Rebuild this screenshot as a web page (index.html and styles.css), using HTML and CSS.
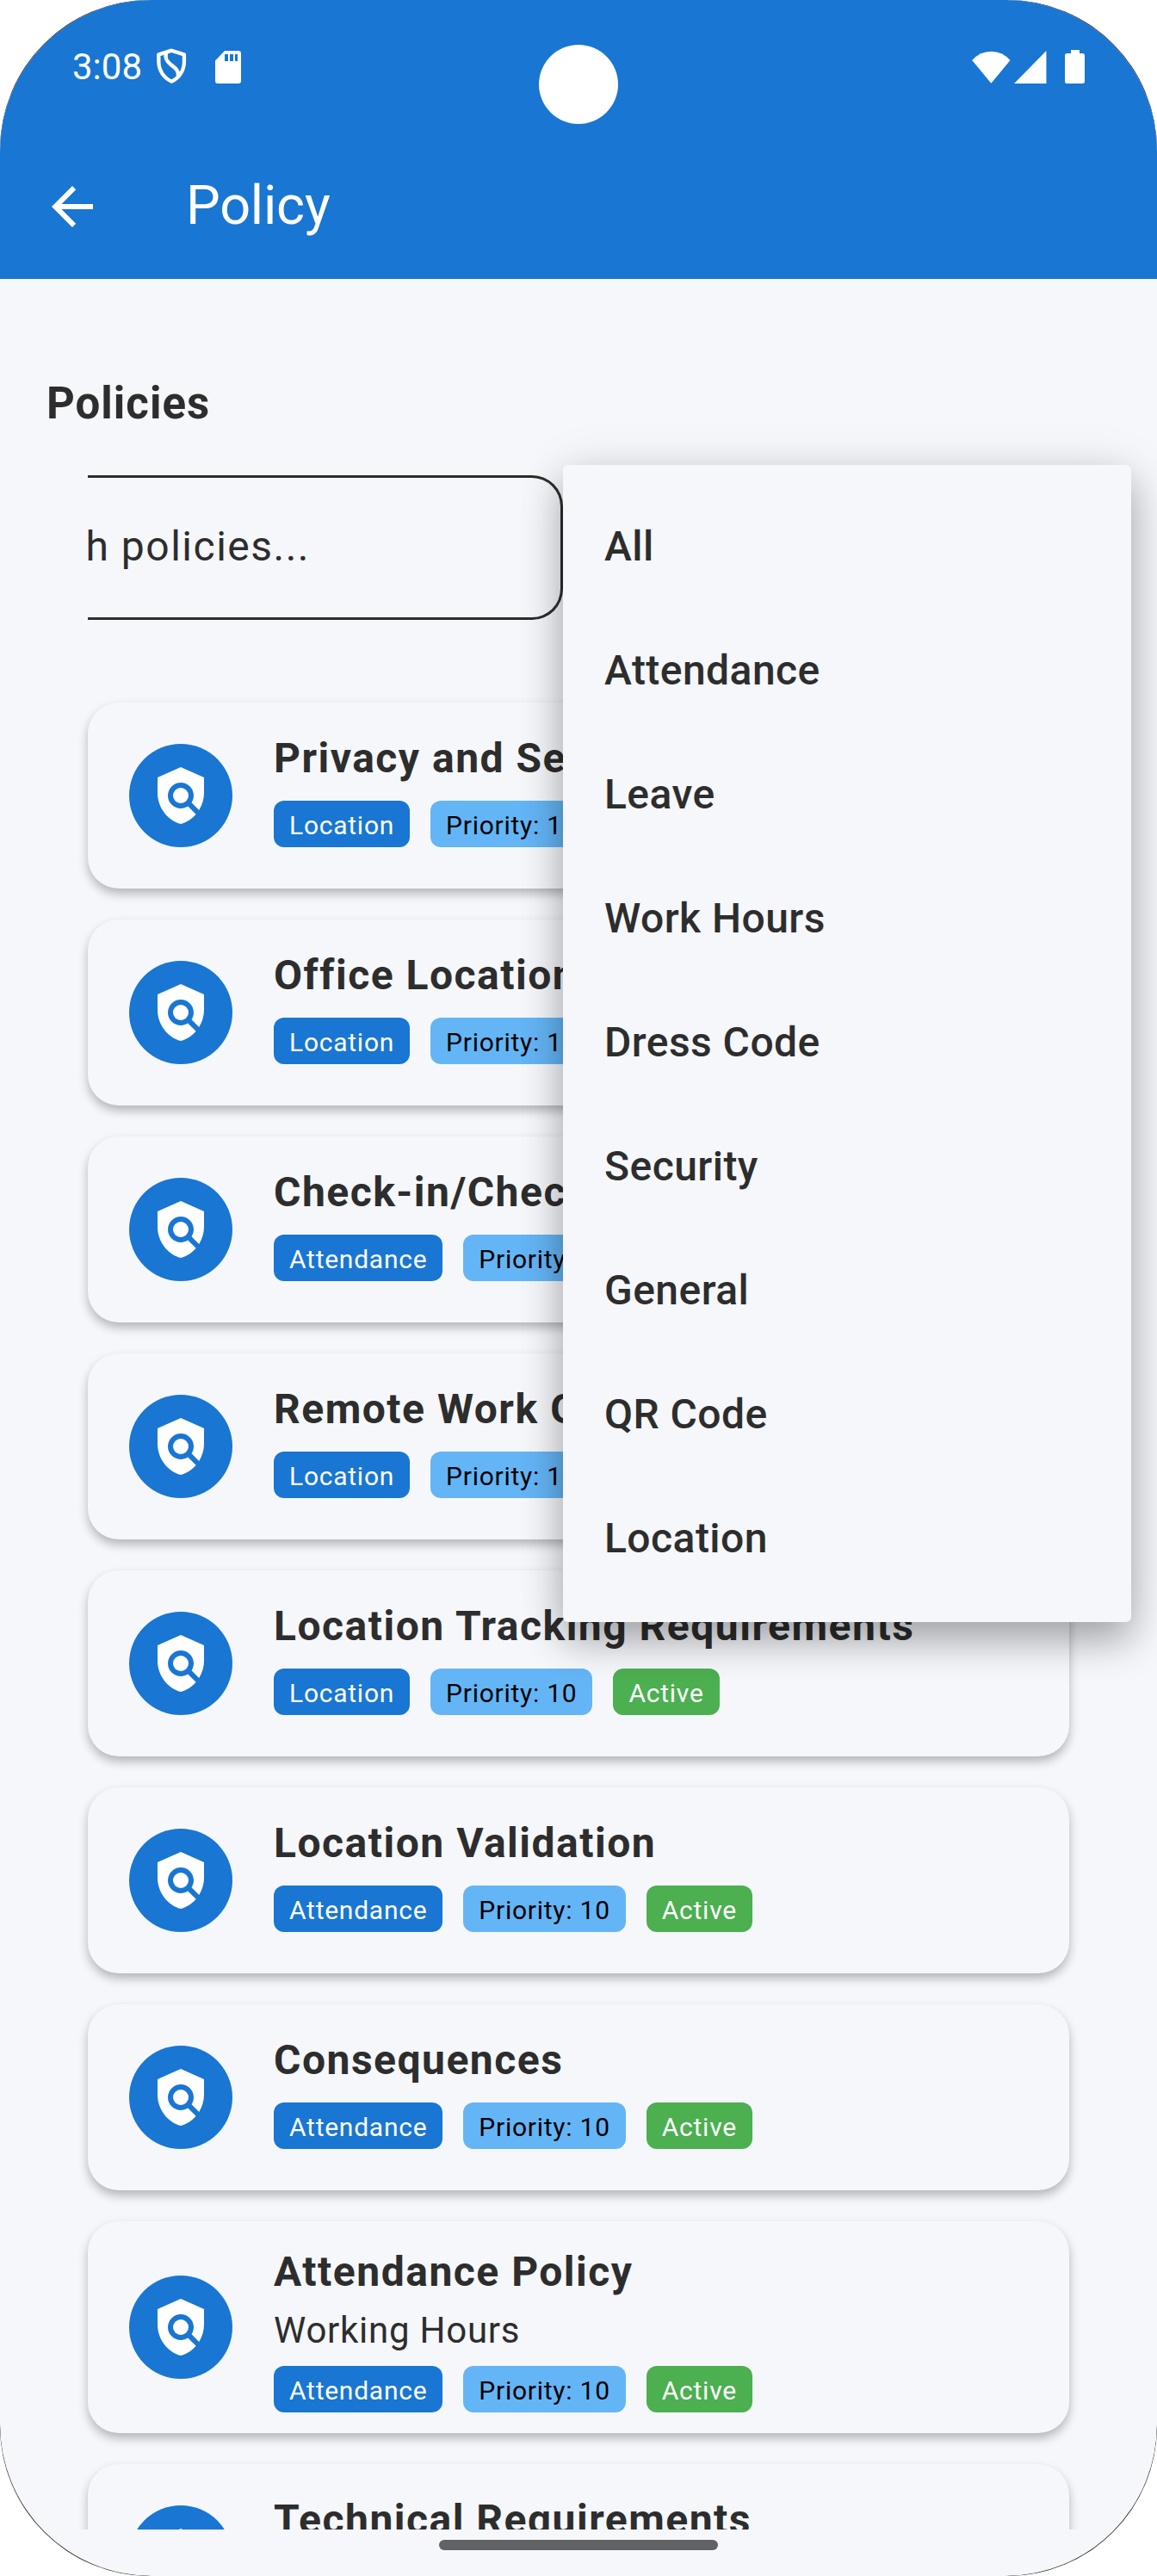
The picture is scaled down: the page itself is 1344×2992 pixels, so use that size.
FILE: index.html
```html
<!DOCTYPE html>
<html lang="en">
<head>
<meta charset="utf-8">
<title>Policy</title>
<link rel="stylesheet" href="styles.css">
</head>
<body>
<svg width="0" height="0" class="defs">
  <symbol id="policy" viewBox="0 0 24 24">
    <path d="M21 5l-9-4-9 4v6c0 5.55 3.84 10.74 9 12 2.3-.56 4.33-1.9 5.88-3.71l-3.12-3.12c-1.94 1.29-4.58 1.07-6.29-.64-1.95-1.95-1.95-5.12 0-7.07 1.95-1.95 5.12-1.95 7.07 0 1.71 1.71 1.92 4.35.64 6.29l2.9 2.9C20.29 15.69 21 13.38 21 11V5z"/>
    <circle cx="12" cy="12" r="3"/>
  </symbol>
</svg>
<div class="frame">
<div class="screen">
  <header class="top">
    <div class="status">
      <span class="time">3:08</span>
      <svg class="shield" viewBox="66 52 104 124"><path d="M118 60L73 74V98C73 131 92 156 118 168C144 156 162 131 162 98V74Z M101 65C92 84 103 100 115 109C132 122 144 130 141 152"/></svg>
      <svg class="sd" viewBox="0 0 30 38"><path fill-rule="evenodd" d="M11 0H27a3 3 0 0 1 3 3V35a3 3 0 0 1-3 3H3a3 3 0 0 1-3-3V11.500ZM11 4V12H15V4ZM17 4V12H21V4ZM23 4V12H26V4Z"/></svg>
      <svg class="wifi" viewBox="58 54 135 115"><path d="M58 87Q86 56 125 56Q164 56 192 87L125 168Z"/></svg>
      <svg class="signal" viewBox="205 56 112 114"><path d="M205 170L317 56V170Z"/></svg>
      <svg class="battery" viewBox="0 0 23 39"><path d="M7 0H17V4H20.500A2.500 2.500 0 0 1 23 6.500V36.500A2.500 2.500 0 0 1 20.500 39H2.500A2.500 2.500 0 0 1 0 36.500V6.500A2.500 2.500 0 0 1 2.500 4H7Z"/></svg>
    </div>
    <div class="appbar">
      <svg class="back" viewBox="0 0 24 24"><path d="M20 11H7.830l5.590-5.590L12 4l-8 8 8 8 1.410-1.410L7.830 13H20v-2z"/></svg>
      <h1>Policy</h1>
    </div>
  </header>
  <main>
    <h2>Policies</h2>
    <div class="search"><span>h policies...</span></div>
    <div class="list">
      <article class="card"><div class="avatar"><svg><use href="#policy"/></svg></div><div class="info"><h3>Privacy and Security</h3><div class="chips"><span class="chip">Location</span><span class="chip priority">Priority: 10</span><span class="chip active">Active</span></div></div></article>
      <article class="card"><div class="avatar"><svg><use href="#policy"/></svg></div><div class="info"><h3>Office Location</h3><div class="chips"><span class="chip">Location</span><span class="chip priority">Priority: 10</span><span class="chip active">Active</span></div></div></article>
      <article class="card"><div class="avatar"><svg><use href="#policy"/></svg></div><div class="info"><h3>Check-in/Check-out</h3><div class="chips"><span class="chip">Attendance</span><span class="chip priority">Priority: 10</span><span class="chip active">Active</span></div></div></article>
      <article class="card"><div class="avatar"><svg><use href="#policy"/></svg></div><div class="info"><h3>Remote Work Guidelines</h3><div class="chips"><span class="chip">Location</span><span class="chip priority">Priority: 10</span><span class="chip active">Active</span></div></div></article>
      <article class="card"><div class="avatar"><svg><use href="#policy"/></svg></div><div class="info"><h3>Location Tracking Requirements</h3><div class="chips"><span class="chip">Location</span><span class="chip priority">Priority: 10</span><span class="chip active">Active</span></div></div></article>
      <article class="card"><div class="avatar"><svg><use href="#policy"/></svg></div><div class="info"><h3>Location Validation</h3><div class="chips"><span class="chip">Attendance</span><span class="chip priority">Priority: 10</span><span class="chip active">Active</span></div></div></article>
      <article class="card"><div class="avatar"><svg><use href="#policy"/></svg></div><div class="info"><h3>Consequences</h3><div class="chips"><span class="chip">Attendance</span><span class="chip priority">Priority: 10</span><span class="chip active">Active</span></div></div></article>
      <article class="card tall"><div class="avatar"><svg><use href="#policy"/></svg></div><div class="info"><h3>Attendance Policy</h3><p>Working Hours</p><div class="chips"><span class="chip">Attendance</span><span class="chip priority">Priority: 10</span><span class="chip active">Active</span></div></div></article>
      <article class="card"><div class="avatar"><svg><use href="#policy"/></svg></div><div class="info"><h3>Technical Requirements</h3></div></article>
    </div>
  </main>
  <footer><div class="handle"></div></footer>
  <ul class="menu">
    <li>All</li><li>Attendance</li><li>Leave</li><li>Work Hours</li><li>Dress Code</li><li>Security</li><li>General</li><li>QR Code</li><li>Location</li>
  </ul>
  <div class="camera"></div>
</div>
</div>
</body>
</html>
```
FILE: styles.css
```css
* { box-sizing: border-box; margin: 0; padding: 0; }
body { background: #fff; font-family: Roboto, sans-serif; color: #2d2d2d; }
.defs { position: absolute; }
.frame { width: 1344px; height: 2992px; border-radius: 174px; background: #222; overflow: hidden; }
.screen {
  position: relative; width: 1344px; height: 2992px; border-radius: 176px;
  overflow: hidden; background: #f5f7fb; display: flex; flex-direction: column;
}

.top { height: 324px; flex: none; background: #1976d2; color: #fff; fill: #fff; }
.status { height: 156px; display: flex; align-items: center; padding: 0 84px 1px; }
.time { font-size: 42px; line-height: 50px; width: 98px; }
.shield { width: 34.6px; height: 41.3px; fill: none; stroke: #fff; stroke-width: 13; stroke-linejoin: round; margin-top: -1px; }
.sd { width: 30px; height: 38px; margin-left: 33.4px; }
.wifi { width: 45px; height: 38px; margin-left: auto; }
.signal { width: 37.5px; height: 38px; margin-left: 4px; }
.battery { width: 23px; height: 39px; margin-left: 21.500px; margin-top: -1px; }
.appbar { height: 168px; display: flex; align-items: center; padding-left: 48px; gap: 96px; }
.back { width: 72px; height: 72px; }
h1 { font-size: 63px; font-weight: 400; line-height: 72px; letter-spacing: -.2px; margin-bottom: 3px; }

main { height: 2614px; flex: none; overflow: hidden; padding: 109px 102px 0; }
h2 { font-size: 51px; line-height: 72px; letter-spacing: 1px; font-weight: 700; margin-left: -48px; }
.search {
  width: 552px; height: 168px; margin-top: 47px; overflow: hidden;
  border: 3px solid #2d2d2d; border-left: 0; border-radius: 0 36px 36px 0;
  font-size: 48px; line-height: 159px; letter-spacing: 1.5px;
}
.search span { margin-left: -2.5px; }

.list { display: flex; flex-direction: column; gap: 36px; margin-top: 96px; }
.card {
  height: 216px; display: flex; align-items: center; gap: 48px; padding: 0 48px;
  border-radius: 36px; background: #f5f7fb; box-shadow: 0 6px 12px rgba(0, 0, 0, .27);
}
.avatar {
  width: 120px; height: 120px; border-radius: 50%; background: #1976d2; flex: none;
  display: flex; align-items: center; justify-content: center;
}
.avatar svg { width: 72px; height: 72px; fill: #fff; }
.info { align-self: flex-start; padding-top: 29px; white-space: nowrap; }
h3 { font-size: 48px; line-height: 72px; letter-spacing: 1.5px; font-weight: 700; }
.chips { display: flex; gap: 24px; margin-top: 13px; }
.chip {
  height: 54px; border-radius: 12px; padding: 3px 18px 0; background: #1976d2; color: #fff;
  font-size: 30px; line-height: 51px; letter-spacing: .75px;
}
.priority { background: #64b5f6; color: #000; }
.active { background: #4caf50; }
.tall { height: 246px; }
.tall .info { padding-top: 23px; }
.tall p { font-size: 42px; line-height: 60px; letter-spacing: .75px; margin-top: 2px; }
.tall .chips { margin-top: 11px; }

footer { height: 54px; padding-top: 12px; display: flex; justify-content: center; }
.handle { width: 324px; height: 12px; border-radius: 6px; background: #616264; }

.menu {
  position: absolute; left: 654px; top: 540px; width: 660px; height: 1344px;
  padding: 24px 48px; list-style: none; background: #f5f7fb; border-radius: 6px;
  box-shadow: 0 22px 46px rgba(0, 0, 0, .31), 0 0 60px rgba(0, 0, 0, .08);
}
.menu li { height: 144px; font-size: 48px; line-height: 142px; letter-spacing: .45px; font-weight: 500; }
.camera { position: absolute; left: 626px; top: 52px; width: 92px; height: 92px; border-radius: 50%; background: #fff; }
```
